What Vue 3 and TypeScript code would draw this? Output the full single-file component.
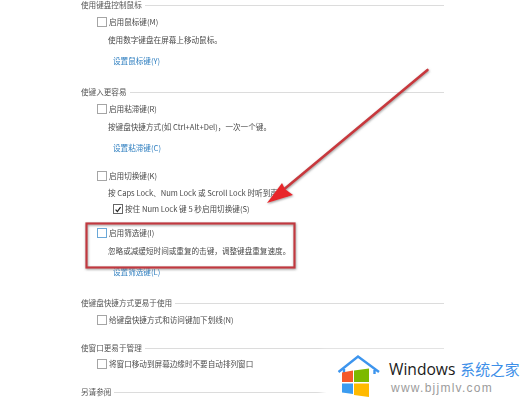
<script setup lang="ts">
interface Opt { label: string; desc?: string; link?: string; focus?: boolean; sub?: string }
interface Section { title: string; cls: string; opts: Opt[] }
const sections: Section[] = [
  { title: '使用键盘控制鼠标', cls: 's1', opts: [
    { label: '启用鼠标键(M)', desc: '使用数字键盘在屏幕上移动鼠标。', link: '设置鼠标键(Y)' } ] },
  { title: '使键入更容易', cls: 's2', opts: [
    { label: '启用粘滞键(R)', desc: '按键盘快捷方式(如 Ctrl+Alt+Del)，一次一个键。', link: '设置粘滞键(C)' },
    { label: '启用切换键(K)', desc: '按 Caps Lock、Num Lock 或 Scroll Lock 时听到声音。', sub: '按住 Num Lock 键 5 秒启用切换键(S)' },
    { label: '启用筛选键(I)', desc: '忽略或减缓短时间或重复的击键，调整键盘重复速度。', link: '设置筛选键(L)', focus: true } ] },
  { title: '使键盘快捷方式更易于使用', cls: 's3', opts: [ { label: '给键盘快捷方式和访问键加下划线(N)' } ] },
  { title: '使窗口更易于管理', cls: 's4', opts: [ { label: '将窗口移动到屏幕边缘时不要自动排列窗口' } ] },
  { title: '另请参阅', cls: 's5', opts: [] },
]
</script>

<template>
  <div class="page">
    <div class="doc">
      <section v-for="s in sections" :key="s.title" class="section" :class="s.cls">
        <div class="head"><span>{{ s.title }}</span><i></i></div>
        <div v-for="o in s.opts" :key="o.label" class="opt">
          <label class="check"><b class="box" :class="{ focus: o.focus }"></b>{{ o.label }}</label>
          <p v-if="o.desc" class="desc" :class="{ tight: o.sub }">{{ o.desc }}</p>
          <label v-if="o.sub" class="check sub"><b class="box on">
            <svg viewBox="0 0 9 9" width="9" height="9"><path d="M1.8 4.6 L3.8 6.8 L7.4 1.8" fill="none" stroke="#222" stroke-width="1.4"/></svg>
          </b>{{ o.sub }}</label>
          <a v-if="o.link" class="link">{{ o.link }}</a>
        </div>
      </section>
    </div>

    <svg class="marks" viewBox="0 0 526 404" width="526" height="404">
      <defs>
        <filter id="sh" x="-10%" y="-10%" width="120%" height="120%"><feDropShadow dx="0.5" dy="1" stdDeviation="1" flood-color="#777" flood-opacity=".75"/></filter>
      </defs>
      <g filter="url(#sh)">
        <rect x="86.5" y="223.5" width="208" height="44" fill="none" stroke="#c1393f" stroke-width="2.2"/>
        <path d="M427.5 70 L282 191" stroke="#c8383e" stroke-width="2.6" fill="none" stroke-linecap="round"/>
        <path d="M267 203 L282 183 L285 189 L293 195 Z" fill="#e8262c"/>
      </g>
    </svg>

    <div class="brand">
      <svg class="house" viewBox="0 0 46 46" width="46" height="46">
        <path d="M2.5 18 L22 2.5 L43 18 M38.5 16 V20 M8 15 V19" fill="none" stroke="#3d95ee" stroke-width="2.4"/>
        <path d="M6 18.5 L17 16.5 V28 H6 Z" fill="#f4592a"/>
        <path d="M18 16.5 L33 14.5 V28 H18 Z" fill="#7db900"/>
        <path d="M6 29.5 H17 V40 L6 38.5 Z" fill="#3b9cf0"/>
        <path d="M18 29.5 H33 V43 L18 41 Z" fill="#ffba00"/>
      </svg>
      <div class="words">
        <div class="l1"><span class="win">Windows</span><span class="cn">系统之家</span></div>
        <div class="url">www.bjjmlv.com</div>
      </div>
    </div>
  </div>
</template>

<style>
html, body { margin: 0; background: #fff; }
</style>

<style scoped>
.page { position: relative; width: 526px; height: 404px; overflow: hidden; background: #fff; font-family: "Noto Sans CJK SC", "Liberation Sans", sans-serif; color: #4a4a4a; }
.doc { display: flex; flex-direction: column; padding: 0 82px 0 81px; margin-top: -3px; filter: blur(.45px); font-size: 7.6px; line-height: 16px; }
.head { display: flex; align-items: center; gap: 3px; height: 16px; color: #555; }
.head i { flex: 1; height: 1px; background: #dcdcdc; }
.section.s2 { margin-top: 12px; }
.section.s3 { margin-top: 12px; }
.section.s4 { margin-top: 11px; }
.section.s5 { margin-top: 11px; }
.opt { display: flex; flex-direction: column; padding-left: 16px; }
.opt + .opt { margin-top: 8px; }
.s4 .opt { margin-top: -1px; }
.check { display: flex; align-items: center; gap: 2px; height: 18px; }
.box { width: 8px; height: 8px; border: 1px solid #a5a5a5; background: #fff; flex: none; display: flex; align-items: center; justify-content: center; }
.box.focus { border-color: #6aa8d8; }
.desc { margin: 0; padding-left: 11px; height: 18px; line-height: 18px; white-space: nowrap; }
.desc.tight { margin-top: -1px; }
.sub { margin-left: 16px; height: 14px; }
.sub .box { border-color: #666; }
.link { padding-left: 16px; margin: 3px 0 2px; height: 18px; line-height: 18px; color: #2f7fc0; }
.marks { position: absolute; left: 0; top: 0; }
.brand { position: absolute; left: 326px; top: 351px; width: 200px; height: 53px; padding: 4px 0 0 10px; box-sizing: border-box; display: flex; background: #fff; box-shadow: -4px 0 6px #fff; gap: 7px; }
.house { flex: none; margin-top: -1px; }
.words { display: flex; flex-direction: column; }
.l1 { display: flex; align-items: baseline; gap: 5px; line-height: 22px; margin-top: 3px; white-space: nowrap; }
.win { font: 15.6px "Open Sans", sans-serif; color: #1a1a1a; }
.cn { font-size: 14.8px; color: #3d8fe8; }
.url { font: 12px "Liberation Sans", sans-serif; letter-spacing: 1.25px; color: #9b9b9b; margin: 1px 0 0 2px; line-height: 14px; }
</style>
